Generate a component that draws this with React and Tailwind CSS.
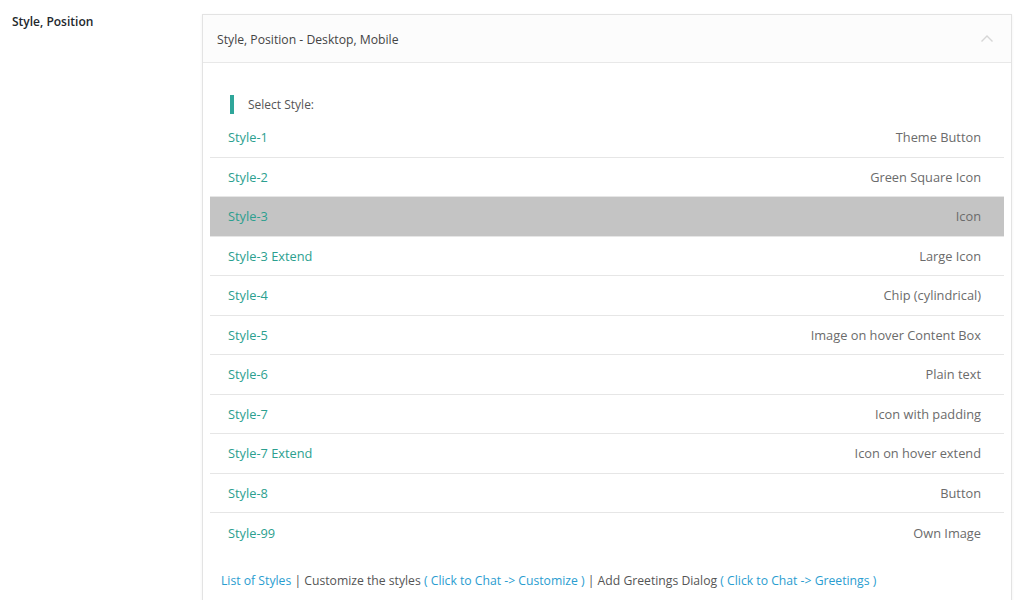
import React from "react";

const rows = [
  ["Style-1", "Theme Button"],
  ["Style-2", "Green Square Icon"],
  ["Style-3", "Icon"],
  ["Style-3 Extend", "Large Icon"],
  ["Style-4", "Chip (cylindrical)"],
  ["Style-5", "Image on hover Content Box"],
  ["Style-6", "Plain text"],
  ["Style-7", "Icon with padding"],
  ["Style-7 Extend", "Icon on hover extend"],
  ["Style-8", "Button"],
  ["Style-99", "Own Image"],
];

export default function App() {
  return (
    <div
      className="flex w-full h-[600px] overflow-hidden bg-white pt-[14px]"
      style={{ fontFamily: '"Open Sans", "Noto Sans", sans-serif' }}
    >
      <div className="w-[202px] shrink-0 pl-[12px] pt-[1px]">
        <div className="text-[12px] font-semibold text-[#23282d] leading-[14px]">Style, Position</div>
      </div>
      <div className="w-[810px] shrink-0 border border-[#e3e3e3] shadow-[0_1px_3px_rgba(0,0,0,0.06)] bg-white self-start">
        <div className="h-[48px] bg-[#fcfcfc] border-b border-[#e8e8e8] flex items-center justify-between pl-[14px] pr-[16px]">
          <span className="text-[12.2px] text-[#444] pt-[3px]">Style, Position - Desktop, Mobile</span>
          <svg width="14" height="9" viewBox="0 0 14 9" className="mr-[1px]">
            <path d="M1.5 7.5 L7 2 L12.5 7.5" fill="none" stroke="#d6d6d6" strokeWidth="1.4" />
          </svg>
        </div>
        <div className="px-[7px]">
          <div className="pt-[32px] pb-[4px] pl-[20px] flex items-center">
            <div className="w-[4px] h-[19px] bg-[#2fa69a]" />
            <span className="ml-[14px] text-[12px] text-[#555] pt-[1px]">Select Style:</span>
          </div>
          {rows.map(([a, b], i) => (
            <div
              key={a}
              className={
                "h-[39.5px] flex items-center justify-between pl-[18px] pr-[23px] pt-[1px] text-[12.8px] " +
                (i < rows.length - 1 ? "border-b border-[#e6e6e6] " : "") +
                (i === 2 ? "bg-[#c4c4c4]" : "")
              }
            >
              <span className="text-[#2c9f8f]">{a}</span>
              <span className="text-[#6b6b6b]">{b}</span>
            </div>
          ))}
        </div>
        <div className="pl-[18px] pt-[19px] pb-[20px] text-[12.2px] text-[#555]">
          <span className="text-[#2a9dd0]">List of Styles</span> | Customize the styles{" "}
          <span className="text-[#2a9dd0]">( Click to Chat -&gt; Customize )</span> | Add Greetings Dialog{" "}
          <span className="text-[#2a9dd0]">( Click to Chat -&gt; Greetings )</span>
        </div>
      </div>
    </div>
  );
}
